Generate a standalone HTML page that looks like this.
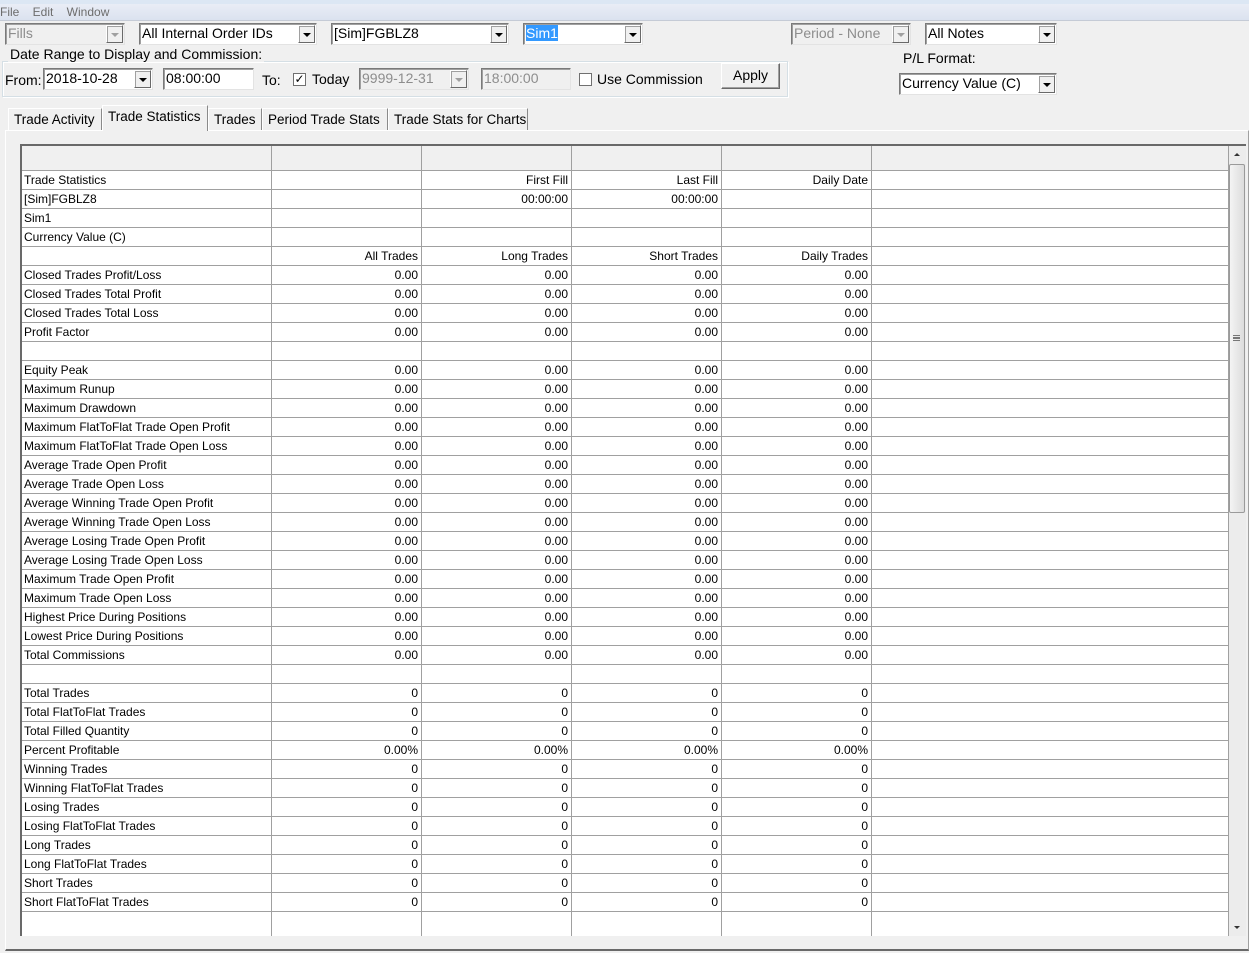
<!DOCTYPE html>
<html><head><meta charset="utf-8">
<style>
*{box-sizing:border-box;margin:0;padding:0}
body{width:1249px;height:953px;background:#f0f0f0;font-family:"Liberation Sans",sans-serif;position:relative;overflow:hidden;color:#000}
.a{position:absolute}
.t{font-size:14px;white-space:nowrap}
.cb{position:absolute;background:#fff;border:1px solid #7a7a7a;border-right-color:#e3e3e3;border-bottom-color:#e3e3e3;box-shadow:inset 1px 1px 0 #a0a0a0;font-size:14px;padding:1px 0 0 2px;white-space:nowrap;height:22px;overflow:hidden}
.cb .ar{position:absolute;right:1px;top:1px;width:17px;height:18px;background:#f0f0f0;border:1px solid #fff;border-right-color:#696969;border-bottom-color:#696969;box-shadow:1px 1px 0 #a0a0a0 inset}
.cb .ar:after{content:"";position:absolute;left:4px;top:7px;border-left:4px solid transparent;border-right:4px solid transparent;border-top:4px solid #000}
.dis{background:#f0f0f0;color:#8d8d8d}
.dis .ar:after{border-top-color:#a0a0a0}
.chk{position:absolute;width:13px;height:13px;background:#fff;border:1px solid #707070}
.tab{position:absolute;top:108px;height:22px;font-size:13.5px;padding:3px 0 0 5px;border:1px solid #fff;border-right:1px solid #8a8a8a;border-bottom:none;background:#f0f0f0;white-space:nowrap;overflow:hidden}
table{border-collapse:collapse;font-size:12px;table-layout:fixed}
td{border:1px solid #a0a0a0;height:19px;padding:0 3px;white-space:nowrap;overflow:hidden;text-align:right;background:#fff;line-height:17px}
td:first-child{text-align:left;padding-left:3px}
tr.h td{height:25px;background:#f0f0f0}
</style></head><body>
<div class="a" style="left:0;top:0;width:1249px;height:4px;background:#dce7f4"></div>
<div class="a" style="left:0;top:4px;width:1249px;height:17px;background:linear-gradient(#e9edf6,#dbe2ef);border-bottom:1px solid #c5cbd6"></div>
<div class="a" style="left:0;top:5px;font-size:12px;color:#6d6d6d">File&nbsp;&nbsp;&nbsp;&nbsp;Edit&nbsp;&nbsp;&nbsp;&nbsp;Window</div>

<div class="cb dis" style="left:5px;top:23px;width:120px">Fills<div class="ar"></div></div>
<div class="cb" style="left:139px;top:23px;width:178px">All Internal Order IDs<div class="ar"></div></div>
<div class="cb" style="left:331px;top:23px;width:178px">[Sim]FGBLZ8<div class="ar"></div></div>
<div class="cb" style="left:523px;top:23px;width:120px"><span style="background:#3399ff;color:#fff">Sim1</span><div class="ar"></div></div>
<div class="cb dis" style="left:791px;top:23px;width:120px">Period - None<div class="ar"></div></div>
<div class="cb" style="left:925px;top:23px;width:132px">All Notes<div class="ar"></div></div>
<div class="a t" style="left:903px;top:50px">P/L Format:</div>
<div class="cb" style="left:899px;top:73px;width:158px">Currency Value (C)<div class="ar"></div></div>

<div class="a" style="left:2px;top:61px;width:786px;height:36px;border:1px solid #d5dfe5;box-shadow:inset 1px 1px 0 #fff,1px 1px 0 #fff"></div>
<div class="a t" style="left:8px;top:46px;background:#f0f0f0;padding:0 2px">Date Range to Display and Commission:</div>
<div class="a t" style="left:5px;top:72px">From:</div>
<div class="cb" style="left:43px;top:68px;width:110px">2018-10-28<div class="ar"></div></div>
<div class="cb" style="left:163px;top:68px;width:91px">08:00:00</div>
<div class="a t" style="left:262px;top:72px">To:</div>
<div class="chk" style="left:293px;top:73px;font-size:12px;line-height:10px;text-align:center">✓</div>
<div class="a t" style="left:312px;top:71px">Today</div>
<div class="cb dis" style="left:359px;top:68px;width:110px">9999-12-31<div class="ar"></div></div>
<div class="cb dis" style="left:481px;top:68px;width:90px">18:00:00</div>
<div class="chk" style="left:579px;top:73px"></div>
<div class="a t" style="left:597px;top:71px">Use Commission</div>
<div class="a t" style="left:721px;top:63px;width:59px;height:26px;border:1px solid #fff;border-right-color:#696969;border-bottom-color:#696969;box-shadow:inset -1px -1px 0 #a0a0a0;text-align:center;padding-top:3px">Apply</div>

<div class="a" style="left:5px;top:130px;width:1244px;height:821px;border:1px solid #fff;border-right-color:#a0a0a0;border-bottom:2px solid #696969"></div>
<div class="tab" style="left:8px;width:94px">Trade Activity</div>
<div class="tab" style="left:102px;top:105px;height:26px;width:106px;z-index:2">Trade Statistics</div>
<div class="tab" style="left:208px;width:54px">Trades</div>
<div class="tab" style="left:262px;width:126px">Period Trade Stats</div>
<div class="tab" style="left:388px;width:140px">Trade Stats for Charts</div>

<div class="a" style="left:20px;top:144px;width:1226px;height:792px;border-left:2px solid #696969;border-top:2px solid #696969;background:#fff;overflow:hidden">
<table style="width:1209px;margin-left:-2px;margin-top:-1px">
<colgroup><col style="width:251px"><col style="width:150px"><col style="width:150px"><col style="width:150px"><col style="width:150px"><col></colgroup>
<tr class="h"><td></td><td></td><td></td><td></td><td></td><td></td></tr>
<tr><td>Trade Statistics</td><td></td><td>First Fill</td><td>Last Fill</td><td>Daily Date</td><td></td></tr>
<tr><td>[Sim]FGBLZ8</td><td></td><td>00:00:00</td><td>00:00:00</td><td></td><td></td></tr>
<tr><td>Sim1</td><td></td><td></td><td></td><td></td><td></td></tr>
<tr><td>Currency Value (C)</td><td></td><td></td><td></td><td></td><td></td></tr>
<tr><td></td><td>All Trades</td><td>Long Trades</td><td>Short Trades</td><td>Daily Trades</td><td></td></tr>
<tr><td>Closed Trades Profit/Loss</td><td>0.00</td><td>0.00</td><td>0.00</td><td>0.00</td><td></td></tr>
<tr><td>Closed Trades Total Profit</td><td>0.00</td><td>0.00</td><td>0.00</td><td>0.00</td><td></td></tr>
<tr><td>Closed Trades Total Loss</td><td>0.00</td><td>0.00</td><td>0.00</td><td>0.00</td><td></td></tr>
<tr><td>Profit Factor</td><td>0.00</td><td>0.00</td><td>0.00</td><td>0.00</td><td></td></tr>
<tr><td></td><td></td><td></td><td></td><td></td><td></td></tr>
<tr><td>Equity Peak</td><td>0.00</td><td>0.00</td><td>0.00</td><td>0.00</td><td></td></tr>
<tr><td>Maximum Runup</td><td>0.00</td><td>0.00</td><td>0.00</td><td>0.00</td><td></td></tr>
<tr><td>Maximum Drawdown</td><td>0.00</td><td>0.00</td><td>0.00</td><td>0.00</td><td></td></tr>
<tr><td>Maximum FlatToFlat Trade Open Profit</td><td>0.00</td><td>0.00</td><td>0.00</td><td>0.00</td><td></td></tr>
<tr><td>Maximum FlatToFlat Trade Open Loss</td><td>0.00</td><td>0.00</td><td>0.00</td><td>0.00</td><td></td></tr>
<tr><td>Average Trade Open Profit</td><td>0.00</td><td>0.00</td><td>0.00</td><td>0.00</td><td></td></tr>
<tr><td>Average Trade Open Loss</td><td>0.00</td><td>0.00</td><td>0.00</td><td>0.00</td><td></td></tr>
<tr><td>Average Winning Trade Open Profit</td><td>0.00</td><td>0.00</td><td>0.00</td><td>0.00</td><td></td></tr>
<tr><td>Average Winning Trade Open Loss</td><td>0.00</td><td>0.00</td><td>0.00</td><td>0.00</td><td></td></tr>
<tr><td>Average Losing Trade Open Profit</td><td>0.00</td><td>0.00</td><td>0.00</td><td>0.00</td><td></td></tr>
<tr><td>Average Losing Trade Open Loss</td><td>0.00</td><td>0.00</td><td>0.00</td><td>0.00</td><td></td></tr>
<tr><td>Maximum Trade Open Profit</td><td>0.00</td><td>0.00</td><td>0.00</td><td>0.00</td><td></td></tr>
<tr><td>Maximum Trade Open Loss</td><td>0.00</td><td>0.00</td><td>0.00</td><td>0.00</td><td></td></tr>
<tr><td>Highest Price During Positions</td><td>0.00</td><td>0.00</td><td>0.00</td><td>0.00</td><td></td></tr>
<tr><td>Lowest Price During Positions</td><td>0.00</td><td>0.00</td><td>0.00</td><td>0.00</td><td></td></tr>
<tr><td>Total Commissions</td><td>0.00</td><td>0.00</td><td>0.00</td><td>0.00</td><td></td></tr>
<tr><td></td><td></td><td></td><td></td><td></td><td></td></tr>
<tr><td>Total Trades</td><td>0</td><td>0</td><td>0</td><td>0</td><td></td></tr>
<tr><td>Total FlatToFlat Trades</td><td>0</td><td>0</td><td>0</td><td>0</td><td></td></tr>
<tr><td>Total Filled Quantity</td><td>0</td><td>0</td><td>0</td><td>0</td><td></td></tr>
<tr><td>Percent Profitable</td><td>0.00%</td><td>0.00%</td><td>0.00%</td><td>0.00%</td><td></td></tr>
<tr><td>Winning Trades</td><td>0</td><td>0</td><td>0</td><td>0</td><td></td></tr>
<tr><td>Winning FlatToFlat Trades</td><td>0</td><td>0</td><td>0</td><td>0</td><td></td></tr>
<tr><td>Losing Trades</td><td>0</td><td>0</td><td>0</td><td>0</td><td></td></tr>
<tr><td>Losing FlatToFlat Trades</td><td>0</td><td>0</td><td>0</td><td>0</td><td></td></tr>
<tr><td>Long Trades</td><td>0</td><td>0</td><td>0</td><td>0</td><td></td></tr>
<tr><td>Long FlatToFlat Trades</td><td>0</td><td>0</td><td>0</td><td>0</td><td></td></tr>
<tr><td>Short Trades</td><td>0</td><td>0</td><td>0</td><td>0</td><td></td></tr>
<tr><td>Short FlatToFlat Trades</td><td>0</td><td>0</td><td>0</td><td>0</td><td></td></tr>
<tr><td style="height:40px"></td><td></td><td></td><td></td><td></td><td></td></tr>
</table>
</div>
<div class="a" style="left:1229px;top:146px;width:17px;height:790px;background:#ececec">
  <div class="a" style="left:5px;top:7px;border-left:3px solid transparent;border-right:3px solid transparent;border-bottom:3px solid #333"></div>
  <div class="a" style="left:0;top:18px;width:16px;height:349px;border:1px solid #9a9a9a;border-radius:2px;background:linear-gradient(90deg,#f4f4f4,#dcdcdc)"></div>
  <div class="a" style="left:4px;top:189px;width:7px;height:6px;border-top:1px solid #777;border-bottom:1px solid #777"><div style="margin-top:1px;border-top:1px solid #777;height:2px;border-bottom:1px solid #777"></div></div>
  <div class="a" style="left:5px;top:780px;border-left:3px solid transparent;border-right:3px solid transparent;border-top:3px solid #333"></div>
</div>
</body></html>
